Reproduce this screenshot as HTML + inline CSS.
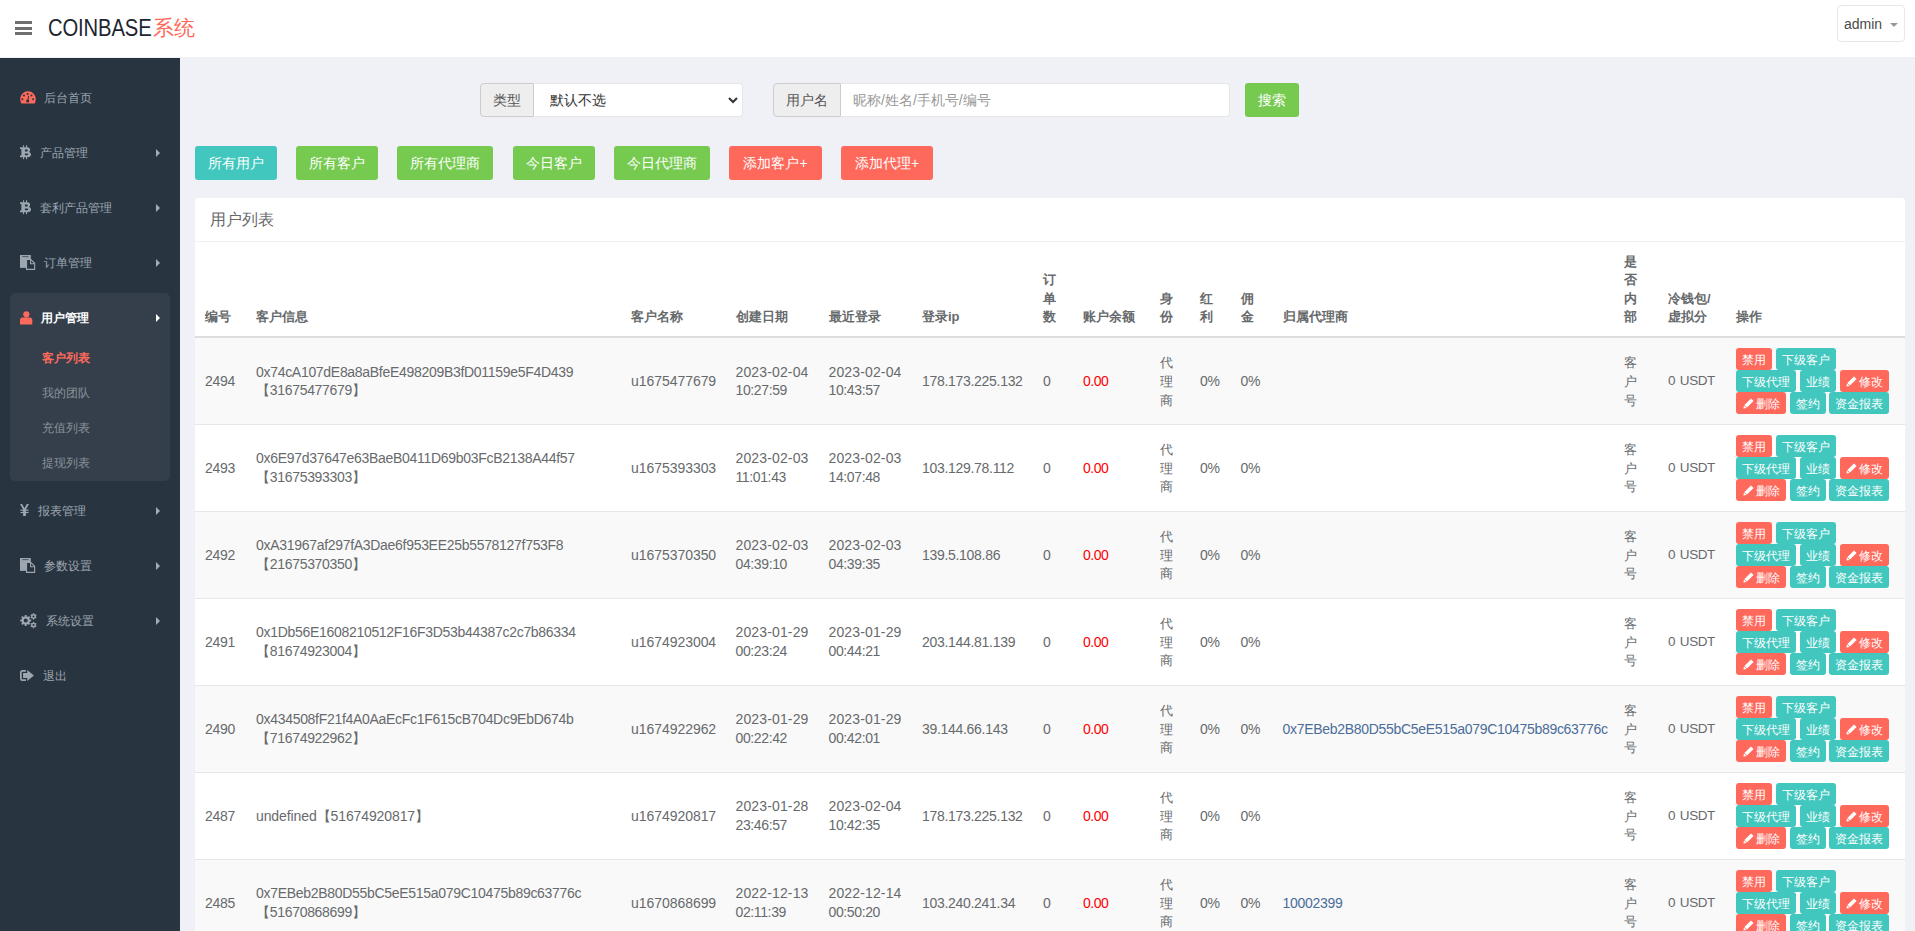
<!DOCTYPE html>
<html><head><meta charset="utf-8">
<style>
*{box-sizing:border-box;margin:0;padding:0}
html,body{width:1915px;height:931px;overflow:hidden;background:#f0f1f6;font-family:"Liberation Sans",sans-serif;color:#676a6c;font-size:13px}
.hdr{position:absolute;left:0;top:0;width:1915px;height:57px;background:#fff}
.burger{position:absolute;left:15px;top:21px;width:17px;height:14px}
.burger i{position:absolute;left:0;width:17px;height:3px;background:#6f6f6f}
.logo{position:absolute;left:48px;top:15px;font-size:22px;color:#1d2530;line-height:26px;white-space:nowrap}
.logo span{position:absolute;left:105px;top:0;color:#fd6a5c;letter-spacing:0;font-size:21px}
.cb{position:absolute;left:0;top:0;font-size:23px;font-weight:normal;letter-spacing:-.15px;transform:scaleX(.88);transform-origin:0 0}
.admin{position:absolute;left:1837px;top:5px;width:68px;height:37px;border:1px solid #e7e8ea;border-radius:4px;background:#fff}
.admin .t{position:absolute;left:6px;top:10px;font-size:14px;color:#4a4a4a;line-height:16px}
.admin .c{position:absolute;left:52px;top:17px;width:0;height:0;border-left:4px solid transparent;border-right:4px solid transparent;border-top:4px solid #999}
.side{position:absolute;left:0;top:58px;width:180px;height:873px;background:#283440}
.act{position:absolute;left:10px;top:235px;width:160px;height:188px;background:#343f4b;border-radius:5px}
.mi{position:absolute;left:0;width:180px;height:20px;color:#9ea6b0;font-size:12px;line-height:20px;white-space:nowrap}
.mi .tx{position:absolute;top:0}
.mi .ar{position:absolute;left:156px;width:0;height:0;border-top:4px solid transparent;border-bottom:4px solid transparent;border-left:4.5px solid #a6acb3}
.mi svg{position:absolute}
.sub{position:absolute;left:42px;font-size:12px;line-height:16px;color:#8a9199;white-space:nowrap}

.ig{position:absolute;top:83px;height:34px}
.ad{position:absolute;top:0;height:34px;background:#eee;border:1px solid #ccc;border-radius:4px 0 0 4px;font-size:14px;color:#555;line-height:32px;text-align:center}
.fc{position:absolute;top:0;height:34px;background:#fff;border:1px solid #e5e6e7;border-left:0;border-radius:0 4px 4px 0;font-size:14px;line-height:32px}
.btn{position:absolute;top:146px;height:34px;border-radius:3px;color:#fff;font-size:14px;line-height:34px;text-align:center;white-space:nowrap}
.teal{background:#42c7be}.green{background:#76ca50}.coral{background:#fe695c}
.panel{position:absolute;left:195px;top:198px;width:1710px;height:760px;background:#fff;border-radius:3px 3px 0 0}
.ptitle{position:absolute;left:15px;top:12px;font-size:16px;line-height:20px;color:#676a6c}
.pline{position:absolute;left:0;top:43px;width:1710px;height:1px;background:#eef0f4}
table{position:absolute;left:0;top:44px;width:1710px;border-collapse:collapse;table-layout:fixed}
th{font-weight:bold;text-align:left;vertical-align:bottom;padding:0 10px 9px 10px;height:95px;border-bottom:2px solid #dddddd;line-height:18.57px;font-size:13px;color:#676a6c}
td{vertical-align:middle;padding:1px 10px 0 10px;letter-spacing:-.3px;height:87px;border-bottom:1px solid #e7e7e7;line-height:18.57px;font-size:14px;color:#676a6c;position:relative}
tr.s td{background:#f9f9f9}
.red{color:#ff0000;letter-spacing:-.48px}
.d1{letter-spacing:.14px}.d2{letter-spacing:-.375px}.un{letter-spacing:-.05px}td.cj{font-size:13px;letter-spacing:0;padding-top:3px}
.lnk{color:#4a6d99}
.ops{position:absolute;left:10px;top:10px;width:160px;height:66px;letter-spacing:0}
.ob{position:absolute;height:22px;border-radius:3px;color:#fff;font-size:12px;line-height:24px;text-align:center;white-space:nowrap}
.ob.t{background:#42c7be}.ob.r{background:#fe695c}

</style></head><body>
<div class="hdr">
  <div class="burger"><i style="top:0"></i><i style="top:5.5px"></i><i style="top:11px"></i></div>
  <div class="logo"><b class="cb">COINBASE</b><span>系统</span></div>
  <div class="admin"><div class="t">admin</div><div class="c"></div></div>
</div>
<div class="side">
  <div class="act"></div>
</div>
<div class="mi" style="top:88px"><svg style="left:20px;top:3px" width="16" height="13" viewBox="0 0 16 13"><path d="M8 0.3A7.8 7.8 0 0 0 0.2 8.1c0 1.6.4 3.1 1.1 4.4h13.4c.7-1.3 1.1-2.8 1.1-4.4A7.8 7.8 0 0 0 8 0.3z" fill="#fd6a5c"/><circle cx="2.4" cy="8.2" r="1" fill="#283440"/><circle cx="4" cy="4.4" r="1" fill="#283440"/><circle cx="7.6" cy="2.9" r="1" fill="#283440"/><circle cx="11.5" cy="4.4" r="1" fill="#283440"/><circle cx="13.1" cy="8.2" r="1" fill="#283440"/><path d="M8.7 4.9L7.8 9.6" stroke="#283440" stroke-width="1"/><circle cx="7.7" cy="10" r="1.6" fill="#283440"/></svg><span class="tx" style="left:44px">后台首页</span></div>
<div class="mi" style="top:143px"><svg style="left:20px;top:2.2px" width="12" height="15" viewBox="0 0 12 15"><path fill-rule="evenodd" d="M0 2.3H7.2C9.3 2.3 10.1 3.5 10.1 4.8 10.1 5.8 9.6 6.5 8.9 6.9 10.2 7.2 11 8.2 11 9.5 11 11.2 9.7 12.3 7.5 12.3H0V10.5H1.4V4.1H0zM4.9 4.4V6.5H6.6C7.4 6.5 7.8 6.1 7.8 5.45 7.8 4.8 7.4 4.4 6.6 4.4zM4.9 8.6V10.3H6.9C7.8 10.3 8.2 9.9 8.2 9.45 8.2 9 7.8 8.6 6.9 8.6z" fill="#9ea6b0"/><rect x="3" y="0.3" width="1.1" height="2.2" fill="#9ea6b0"/><rect x="6" y="0.3" width="1.1" height="2.2" fill="#9ea6b0"/><rect x="3" y="12.1" width="1.1" height="2.1" fill="#9ea6b0"/><rect x="6" y="12.1" width="1.1" height="2.1" fill="#9ea6b0"/></svg><span class="tx" style="left:40px">产品管理</span><i class="ar" style="top:6px;border-left-color:#a6acb3"></i></div>
<div class="mi" style="top:198px"><svg style="left:20px;top:2.2px" width="12" height="15" viewBox="0 0 12 15"><path fill-rule="evenodd" d="M0 2.3H7.2C9.3 2.3 10.1 3.5 10.1 4.8 10.1 5.8 9.6 6.5 8.9 6.9 10.2 7.2 11 8.2 11 9.5 11 11.2 9.7 12.3 7.5 12.3H0V10.5H1.4V4.1H0zM4.9 4.4V6.5H6.6C7.4 6.5 7.8 6.1 7.8 5.45 7.8 4.8 7.4 4.4 6.6 4.4zM4.9 8.6V10.3H6.9C7.8 10.3 8.2 9.9 8.2 9.45 8.2 9 7.8 8.6 6.9 8.6z" fill="#9ea6b0"/><rect x="3" y="0.3" width="1.1" height="2.2" fill="#9ea6b0"/><rect x="6" y="0.3" width="1.1" height="2.2" fill="#9ea6b0"/><rect x="3" y="12.1" width="1.1" height="2.1" fill="#9ea6b0"/><rect x="6" y="12.1" width="1.1" height="2.1" fill="#9ea6b0"/></svg><span class="tx" style="left:40px">套利产品管理</span><i class="ar" style="top:6px;border-left-color:#a6acb3"></i></div>
<div class="mi" style="top:253px"><svg style="left:20px;top:1px" width="16" height="17" viewBox="0 0 16 17"><path d="M0 1H10.8V13.9H0z" fill="#9ea6b0"/><path d="M2.2 2.4H8.6V3.1H2.2z" fill="#283440"/><path d="M6.55 5.45H10.9L14.65 9.3V15.35H6.55Z" fill="#283440" stroke="#9ea6b0" stroke-width="1.1"/><path d="M10.6 5.6V9.7H14.6" fill="none" stroke="#9ea6b0" stroke-width="1.1"/></svg><span class="tx" style="left:44px">订单管理</span><i class="ar" style="top:6px;border-left-color:#a6acb3"></i></div>
<div class="mi" style="top:308px;color:#fff;font-weight:bold"><svg style="left:20px;top:2.5px" width="13" height="14" viewBox="0 0 13 14"><circle cx="6.35" cy="3.3" r="3.1" fill="#fd6a5c"/><path d="M0 13.5V9.3C0 7.7 1.1 6.6 2.6 6.6H9.7C11.2 6.6 12.3 7.7 12.3 9.3V13.5Z" fill="#fd6a5c"/></svg><span class="tx" style="left:41px">用户管理</span><i class="ar" style="top:6px;border-left-color:#fff"></i></div>
<div class="sub" style="top:350px;color:#fd6a5c;font-weight:bold">客户列表</div>
<div class="sub" style="top:385px">我的团队</div>
<div class="sub" style="top:420px">充值列表</div>
<div class="sub" style="top:455px">提现列表</div>
<div class="mi" style="top:501px"><svg style="left:20px;top:3px" width="10" height="13" viewBox="0 0 10 13"><path d="M0 0H2.1L4.5 4.3 6.9 0H9L5.9 5.4V12H3.1V5.4Z" fill="#9ea6b0"/><rect x="0.5" y="5.6" width="8" height="1.2" fill="#9ea6b0"/><rect x="0.5" y="7.9" width="8" height="1.2" fill="#9ea6b0"/></svg><span class="tx" style="left:38px">报表管理</span><i class="ar" style="top:6px;border-left-color:#a6acb3"></i></div>
<div class="mi" style="top:556px"><svg style="left:20px;top:0.5px" width="16" height="17" viewBox="0 0 16 17"><path d="M0 1H10.8V13.9H0z" fill="#9ea6b0"/><path d="M2.2 2.4H8.6V3.1H2.2z" fill="#283440"/><path d="M6.55 5.45H10.9L14.65 9.3V15.35H6.55Z" fill="#283440" stroke="#9ea6b0" stroke-width="1.1"/><path d="M10.6 5.6V9.7H14.6" fill="none" stroke="#9ea6b0" stroke-width="1.1"/></svg><span class="tx" style="left:44px">参数设置</span><i class="ar" style="top:6px;border-left-color:#a6acb3"></i></div>
<div class="mi" style="top:611px"><svg style="left:19.5px;top:1.5px" width="18" height="16" viewBox="0 0 18 16"><circle cx="5.7" cy="7.5" r="4.1" fill="#9ea6b0"/><rect x="4.75" y="2.00" width="1.9" height="11.00" fill="#9ea6b0" transform="rotate(0.0 5.7 7.5)"/><rect x="4.75" y="2.00" width="1.9" height="11.00" fill="#9ea6b0" transform="rotate(45.0 5.7 7.5)"/><rect x="4.75" y="2.00" width="1.9" height="11.00" fill="#9ea6b0" transform="rotate(90.0 5.7 7.5)"/><rect x="4.75" y="2.00" width="1.9" height="11.00" fill="#9ea6b0" transform="rotate(135.0 5.7 7.5)"/><circle cx="5.7" cy="7.5" r="2.0" fill="#283440"/><circle cx="13.5" cy="3.4" r="2.4" fill="#9ea6b0"/><rect x="12.80" y="0.20" width="1.4" height="6.40" fill="#9ea6b0" transform="rotate(0.0 13.5 3.4)"/><rect x="12.80" y="0.20" width="1.4" height="6.40" fill="#9ea6b0" transform="rotate(60.0 13.5 3.4)"/><rect x="12.80" y="0.20" width="1.4" height="6.40" fill="#9ea6b0" transform="rotate(120.0 13.5 3.4)"/><circle cx="13.5" cy="3.4" r="1.0" fill="#283440"/><circle cx="13.5" cy="12.1" r="2.4" fill="#9ea6b0"/><rect x="12.80" y="8.90" width="1.4" height="6.40" fill="#9ea6b0" transform="rotate(0.0 13.5 12.1)"/><rect x="12.80" y="8.90" width="1.4" height="6.40" fill="#9ea6b0" transform="rotate(60.0 13.5 12.1)"/><rect x="12.80" y="8.90" width="1.4" height="6.40" fill="#9ea6b0" transform="rotate(120.0 13.5 12.1)"/><circle cx="13.5" cy="12.1" r="1.0" fill="#283440"/></svg><span class="tx" style="left:46px">系统设置</span><i class="ar" style="top:6px;border-left-color:#a6acb3"></i></div>
<div class="mi" style="top:666px"><svg style="left:20px;top:4px" width="14" height="12" viewBox="0 0 14 12"><path d="M5.9 0.85H2.3C1.4 0.85 0.85 1.4 0.85 2.3V8.7C0.85 9.6 1.4 10.15 2.3 10.15H5.9" fill="none" stroke="#9ea6b0" stroke-width="1.7"/><path d="M7.3 0.1L13.9 5.5 7.3 10.9V7.9H3.1V3.1H7.3Z" fill="#9ea6b0"/></svg><span class="tx" style="left:43px">退出</span></div>
<div class="ig" style="left:480px;width:263px"><div class="ad" style="left:0;width:54px">类型</div><div class="fc" style="left:54px;width:209px;color:#333;padding-left:16px">默认不选<svg style="position:absolute;left:194px;top:13px" width="10" height="7" viewBox="0 0 10 7"><path d="M1 1l4 4 4-4" fill="none" stroke="#333" stroke-width="2"/></svg></div></div>
<div class="ig" style="left:773px;width:457px"><div class="ad" style="left:0;width:68px">用户名</div><div class="fc" style="left:68px;width:389px;color:#999;padding-left:12px">昵称/姓名/手机号/编号</div></div>
<div class="btn green" style="left:1245px;top:83px;width:54px">搜索</div>
<div class="btn teal" style="left:195px;width:82px">所有用户</div>
<div class="btn green" style="left:296px;width:82px">所有客户</div>
<div class="btn green" style="left:397px;width:96px">所有代理商</div>
<div class="btn green" style="left:513px;width:82px">今日客户</div>
<div class="btn green" style="left:614px;width:96px">今日代理商</div>
<div class="btn coral" style="left:729px;width:93px">添加客户+</div>
<div class="btn coral" style="left:841px;width:92px">添加代理+</div>
<div class="panel"><div class="ptitle">用户列表</div><div class="pline"></div>
<table><colgroup><col style="width:51px"><col style="width:375px"><col style="width:104.5px"><col style="width:93px"><col style="width:93.5px"><col style="width:121px"><col style="width:40px"><col style="width:77px"><col style="width:40px"><col style="width:40.5px"><col style="width:42px"><col style="width:341.5px"><col style="width:44px"><col style="width:68px"><col style="width:179px"></colgroup>
<thead><tr><th>编号</th><th>客户信息</th><th>客户名称</th><th>创建日期</th><th>最近登录</th><th>登录ip</th><th>订单数</th><th>账户余额</th><th>身份</th><th>红利</th><th>佣金</th><th>归属代理商</th><th>是否内部</th><th>冷钱包/虚拟分</th><th>操作</th></tr></thead>
<tbody>
<tr class="s"><td>2494</td><td>0x74cA107dE8a8aBfeE498209B3fD01159e5F4D439<br>【31675477679】</td><td class="un">u1675477679</td><td><span class="d1">2023-02-04</span><br><span class="d2">10:27:59</span></td><td><span class="d1">2023-02-04</span><br><span class="d2">10:43:57</span></td><td>178.173.225.132</td><td>0</td><td class="red">0.00</td><td class="cj">代<br>理<br>商</td><td>0%</td><td>0%</td><td class="lnk"></td><td class="cj">客<br>户<br>号</td><td style="font-size:13.5px;letter-spacing:-.45px;word-spacing:1.5px">0 USDT</td><td><div class="ops"><div class="ob r" style="left:0;top:0;width:36px">禁用</div><div class="ob t" style="left:40px;top:0;width:60px">下级客户</div><div class="ob t" style="left:0;top:22px;width:60px">下级代理</div><div class="ob t" style="left:64px;top:22px;width:36px">业绩</div><div class="ob r" style="left:104px;top:22px;width:49px"><svg width="11" height="11" viewBox="0 0 11 11" style="vertical-align:-1px;margin-right:2px"><path d="M8 .4l2.6 2.6-6.6 6.6-2.6-2.6z" fill="#fff"/><path d="M1 7.4l2.6 2.6-3.2.6z" fill="#fff"/></svg>修改</div><div class="ob r" style="left:0;top:44px;width:50px"><svg width="11" height="11" viewBox="0 0 11 11" style="vertical-align:-1px;margin-right:2px"><path d="M8 .4l2.6 2.6-6.6 6.6-2.6-2.6z" fill="#fff"/><path d="M1 7.4l2.6 2.6-3.2.6z" fill="#fff"/></svg>删除</div><div class="ob t" style="left:54px;top:44px;width:36px">签约</div><div class="ob t" style="left:93px;top:44px;width:60px">资金报表</div></div></td></tr>
<tr><td>2493</td><td>0x6E97d37647e63BaeB0411D69b03FcB2138A44f57<br>【31675393303】</td><td class="un">u1675393303</td><td><span class="d1">2023-02-03</span><br><span class="d2">11:01:43</span></td><td><span class="d1">2023-02-03</span><br><span class="d2">14:07:48</span></td><td>103.129.78.112</td><td>0</td><td class="red">0.00</td><td class="cj">代<br>理<br>商</td><td>0%</td><td>0%</td><td class="lnk"></td><td class="cj">客<br>户<br>号</td><td style="font-size:13.5px;letter-spacing:-.45px;word-spacing:1.5px">0 USDT</td><td><div class="ops"><div class="ob r" style="left:0;top:0;width:36px">禁用</div><div class="ob t" style="left:40px;top:0;width:60px">下级客户</div><div class="ob t" style="left:0;top:22px;width:60px">下级代理</div><div class="ob t" style="left:64px;top:22px;width:36px">业绩</div><div class="ob r" style="left:104px;top:22px;width:49px"><svg width="11" height="11" viewBox="0 0 11 11" style="vertical-align:-1px;margin-right:2px"><path d="M8 .4l2.6 2.6-6.6 6.6-2.6-2.6z" fill="#fff"/><path d="M1 7.4l2.6 2.6-3.2.6z" fill="#fff"/></svg>修改</div><div class="ob r" style="left:0;top:44px;width:50px"><svg width="11" height="11" viewBox="0 0 11 11" style="vertical-align:-1px;margin-right:2px"><path d="M8 .4l2.6 2.6-6.6 6.6-2.6-2.6z" fill="#fff"/><path d="M1 7.4l2.6 2.6-3.2.6z" fill="#fff"/></svg>删除</div><div class="ob t" style="left:54px;top:44px;width:36px">签约</div><div class="ob t" style="left:93px;top:44px;width:60px">资金报表</div></div></td></tr>
<tr class="s"><td>2492</td><td>0xA31967af297fA3Dae6f953EE25b5578127f753F8<br>【21675370350】</td><td class="un">u1675370350</td><td><span class="d1">2023-02-03</span><br><span class="d2">04:39:10</span></td><td><span class="d1">2023-02-03</span><br><span class="d2">04:39:35</span></td><td>139.5.108.86</td><td>0</td><td class="red">0.00</td><td class="cj">代<br>理<br>商</td><td>0%</td><td>0%</td><td class="lnk"></td><td class="cj">客<br>户<br>号</td><td style="font-size:13.5px;letter-spacing:-.45px;word-spacing:1.5px">0 USDT</td><td><div class="ops"><div class="ob r" style="left:0;top:0;width:36px">禁用</div><div class="ob t" style="left:40px;top:0;width:60px">下级客户</div><div class="ob t" style="left:0;top:22px;width:60px">下级代理</div><div class="ob t" style="left:64px;top:22px;width:36px">业绩</div><div class="ob r" style="left:104px;top:22px;width:49px"><svg width="11" height="11" viewBox="0 0 11 11" style="vertical-align:-1px;margin-right:2px"><path d="M8 .4l2.6 2.6-6.6 6.6-2.6-2.6z" fill="#fff"/><path d="M1 7.4l2.6 2.6-3.2.6z" fill="#fff"/></svg>修改</div><div class="ob r" style="left:0;top:44px;width:50px"><svg width="11" height="11" viewBox="0 0 11 11" style="vertical-align:-1px;margin-right:2px"><path d="M8 .4l2.6 2.6-6.6 6.6-2.6-2.6z" fill="#fff"/><path d="M1 7.4l2.6 2.6-3.2.6z" fill="#fff"/></svg>删除</div><div class="ob t" style="left:54px;top:44px;width:36px">签约</div><div class="ob t" style="left:93px;top:44px;width:60px">资金报表</div></div></td></tr>
<tr><td>2491</td><td>0x1Db56E1608210512F16F3D53b44387c2c7b86334<br>【81674923004】</td><td class="un">u1674923004</td><td><span class="d1">2023-01-29</span><br><span class="d2">00:23:24</span></td><td><span class="d1">2023-01-29</span><br><span class="d2">00:44:21</span></td><td>203.144.81.139</td><td>0</td><td class="red">0.00</td><td class="cj">代<br>理<br>商</td><td>0%</td><td>0%</td><td class="lnk"></td><td class="cj">客<br>户<br>号</td><td style="font-size:13.5px;letter-spacing:-.45px;word-spacing:1.5px">0 USDT</td><td><div class="ops"><div class="ob r" style="left:0;top:0;width:36px">禁用</div><div class="ob t" style="left:40px;top:0;width:60px">下级客户</div><div class="ob t" style="left:0;top:22px;width:60px">下级代理</div><div class="ob t" style="left:64px;top:22px;width:36px">业绩</div><div class="ob r" style="left:104px;top:22px;width:49px"><svg width="11" height="11" viewBox="0 0 11 11" style="vertical-align:-1px;margin-right:2px"><path d="M8 .4l2.6 2.6-6.6 6.6-2.6-2.6z" fill="#fff"/><path d="M1 7.4l2.6 2.6-3.2.6z" fill="#fff"/></svg>修改</div><div class="ob r" style="left:0;top:44px;width:50px"><svg width="11" height="11" viewBox="0 0 11 11" style="vertical-align:-1px;margin-right:2px"><path d="M8 .4l2.6 2.6-6.6 6.6-2.6-2.6z" fill="#fff"/><path d="M1 7.4l2.6 2.6-3.2.6z" fill="#fff"/></svg>删除</div><div class="ob t" style="left:54px;top:44px;width:36px">签约</div><div class="ob t" style="left:93px;top:44px;width:60px">资金报表</div></div></td></tr>
<tr class="s"><td>2490</td><td>0x434508fF21f4A0AaEcFc1F615cB704Dc9EbD674b<br>【71674922962】</td><td class="un">u1674922962</td><td><span class="d1">2023-01-29</span><br><span class="d2">00:22:42</span></td><td><span class="d1">2023-01-29</span><br><span class="d2">00:42:01</span></td><td>39.144.66.143</td><td>0</td><td class="red">0.00</td><td class="cj">代<br>理<br>商</td><td>0%</td><td>0%</td><td class="lnk">0x7EBeb2B80D55bC5eE515a079C10475b89c63776c</td><td class="cj">客<br>户<br>号</td><td style="font-size:13.5px;letter-spacing:-.45px;word-spacing:1.5px">0 USDT</td><td><div class="ops"><div class="ob r" style="left:0;top:0;width:36px">禁用</div><div class="ob t" style="left:40px;top:0;width:60px">下级客户</div><div class="ob t" style="left:0;top:22px;width:60px">下级代理</div><div class="ob t" style="left:64px;top:22px;width:36px">业绩</div><div class="ob r" style="left:104px;top:22px;width:49px"><svg width="11" height="11" viewBox="0 0 11 11" style="vertical-align:-1px;margin-right:2px"><path d="M8 .4l2.6 2.6-6.6 6.6-2.6-2.6z" fill="#fff"/><path d="M1 7.4l2.6 2.6-3.2.6z" fill="#fff"/></svg>修改</div><div class="ob r" style="left:0;top:44px;width:50px"><svg width="11" height="11" viewBox="0 0 11 11" style="vertical-align:-1px;margin-right:2px"><path d="M8 .4l2.6 2.6-6.6 6.6-2.6-2.6z" fill="#fff"/><path d="M1 7.4l2.6 2.6-3.2.6z" fill="#fff"/></svg>删除</div><div class="ob t" style="left:54px;top:44px;width:36px">签约</div><div class="ob t" style="left:93px;top:44px;width:60px">资金报表</div></div></td></tr>
<tr><td>2487</td><td style="letter-spacing:-.1px">undefined【51674920817】</td><td class="un">u1674920817</td><td><span class="d1">2023-01-28</span><br><span class="d2">23:46:57</span></td><td><span class="d1">2023-02-04</span><br><span class="d2">10:42:35</span></td><td>178.173.225.132</td><td>0</td><td class="red">0.00</td><td class="cj">代<br>理<br>商</td><td>0%</td><td>0%</td><td class="lnk"></td><td class="cj">客<br>户<br>号</td><td style="font-size:13.5px;letter-spacing:-.45px;word-spacing:1.5px">0 USDT</td><td><div class="ops"><div class="ob r" style="left:0;top:0;width:36px">禁用</div><div class="ob t" style="left:40px;top:0;width:60px">下级客户</div><div class="ob t" style="left:0;top:22px;width:60px">下级代理</div><div class="ob t" style="left:64px;top:22px;width:36px">业绩</div><div class="ob r" style="left:104px;top:22px;width:49px"><svg width="11" height="11" viewBox="0 0 11 11" style="vertical-align:-1px;margin-right:2px"><path d="M8 .4l2.6 2.6-6.6 6.6-2.6-2.6z" fill="#fff"/><path d="M1 7.4l2.6 2.6-3.2.6z" fill="#fff"/></svg>修改</div><div class="ob r" style="left:0;top:44px;width:50px"><svg width="11" height="11" viewBox="0 0 11 11" style="vertical-align:-1px;margin-right:2px"><path d="M8 .4l2.6 2.6-6.6 6.6-2.6-2.6z" fill="#fff"/><path d="M1 7.4l2.6 2.6-3.2.6z" fill="#fff"/></svg>删除</div><div class="ob t" style="left:54px;top:44px;width:36px">签约</div><div class="ob t" style="left:93px;top:44px;width:60px">资金报表</div></div></td></tr>
<tr class="s"><td>2485</td><td>0x7EBeb2B80D55bC5eE515a079C10475b89c63776c<br>【51670868699】</td><td class="un">u1670868699</td><td><span class="d1">2022-12-13</span><br><span class="d2">02:11:39</span></td><td><span class="d1">2022-12-14</span><br><span class="d2">00:50:20</span></td><td>103.240.241.34</td><td>0</td><td class="red">0.00</td><td class="cj">代<br>理<br>商</td><td>0%</td><td>0%</td><td class="lnk">10002399</td><td class="cj">客<br>户<br>号</td><td style="font-size:13.5px;letter-spacing:-.45px;word-spacing:1.5px">0 USDT</td><td><div class="ops"><div class="ob r" style="left:0;top:0;width:36px">禁用</div><div class="ob t" style="left:40px;top:0;width:60px">下级客户</div><div class="ob t" style="left:0;top:22px;width:60px">下级代理</div><div class="ob t" style="left:64px;top:22px;width:36px">业绩</div><div class="ob r" style="left:104px;top:22px;width:49px"><svg width="11" height="11" viewBox="0 0 11 11" style="vertical-align:-1px;margin-right:2px"><path d="M8 .4l2.6 2.6-6.6 6.6-2.6-2.6z" fill="#fff"/><path d="M1 7.4l2.6 2.6-3.2.6z" fill="#fff"/></svg>修改</div><div class="ob r" style="left:0;top:44px;width:50px"><svg width="11" height="11" viewBox="0 0 11 11" style="vertical-align:-1px;margin-right:2px"><path d="M8 .4l2.6 2.6-6.6 6.6-2.6-2.6z" fill="#fff"/><path d="M1 7.4l2.6 2.6-3.2.6z" fill="#fff"/></svg>删除</div><div class="ob t" style="left:54px;top:44px;width:36px">签约</div><div class="ob t" style="left:93px;top:44px;width:60px">资金报表</div></div></td></tr>
</tbody></table></div>
</body></html>
